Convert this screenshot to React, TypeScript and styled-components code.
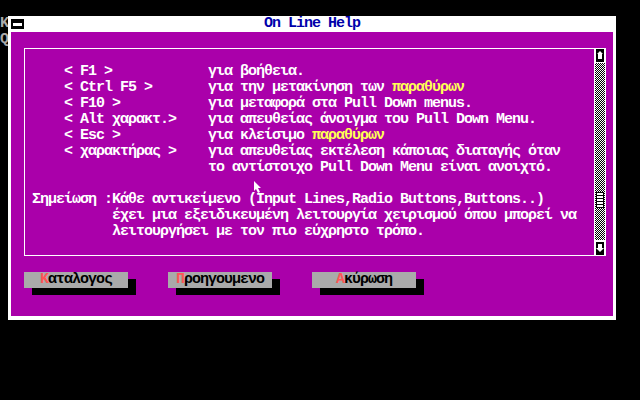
import React from "react";
import styled, { createGlobalStyle } from "styled-components";

const GlobalStyle = createGlobalStyle`
    body {
        margin: 0;
        background: #000000;
    }
`;

type HelpLine = {
    key: string;
    text: string;
    hot?: string;
};

const lines: HelpLine[] = [
    { key: "< F1 >", text: "για βοήθεια." },
    { key: "< Ctrl F5 >", text: "για την μετακίνηση των ", hot: "παραθύρων" },
    { key: "< F10 >", text: "για μεταφορά στα Pull Down menus." },
    { key: "< Alt χαρακτ.>", text: "για απευθείας άνοιγμα του Pull Down Menu." },
    { key: "< Esc >", text: "για κλείσιμο ", hot: "παραθύρων" },
    { key: "< χαρακτήρας >", text: "για απευθείας εκτέλεση κάποιας διαταγής όταν" },
    { key: "", text: "το αντίστοιχο Pull Down Menu είναι ανοιχτό." },
];

const buttons = ["Καταλογος", "Προηγουμενο", "Ακύρωση"];

export default function App() {
    return (
        <Screen>
            <GlobalStyle />
            <Backdrop>
                <div>K</div>
                <div>Q</div>
            </Backdrop>
            <Window>
                <TitleBar>
                    <CloseBox><Dash /></CloseBox>
                    <Title>On Line Help</Title>
                    <span />
                </TitleBar>
                <Body>
                    <HelpPanel>
                        <TextArea>
                            {lines.map((l, i) => (
                                <KeyRow key={i}>
                                    <span>{l.key}</span>
                                    <span>{l.text}{l.hot && <Hot>{l.hot}</Hot>}</span>
                                </KeyRow>
                            ))}
                            <Note>
                                <span>Σημείωση :</span>
                                <div>
                                    <div>Κάθε αντικείμενο (Input Lines,Radio Buttons,Buttons..)</div>
                                    <div>έχει μια εξειδικευμένη λειτουργία χειρισμού όπου μπορεί να</div>
                                    <div>λειτουργήσει με τον πιο εύχρηστο τρόπο.</div>
                                </div>
                            </Note>
                        </TextArea>
                        <ScrollBar>
                            <ArrowBox>
                                <svg width="8" height="13" viewBox="0 0 8 13">
                                    <path d="M4 2 L7 5 H6 V10 H2 V5 H1 Z" fill="#fff" />
                                </svg>
                            </ArrowBox>
                            <Track>
                                <Thumb style={{ marginTop: 129 }} />
                            </Track>
                            <ArrowBox $down>
                                <svg width="8" height="13" viewBox="0 0 8 13">
                                    <path d="M2 2 H6 V6 H8 L4 10 L0 6 H2 Z" fill="#fff" />
                                </svg>
                            </ArrowBox>
                        </ScrollBar>
                    </HelpPanel>
                    <ButtonRow>
                        {buttons.map((b) => (
                            <Button key={b}>
                                <Hotkey>{b[0]}</Hotkey>{b.slice(1)}
                            </Button>
                        ))}
                    </ButtonRow>
                </Body>
            </Window>
            <Cursor width="9" height="12" viewBox="0 0 9 12">
                <path d="M0 0 V10 L2 8 L4 12 L6 11 L4 7 H7 Z" fill="#fff" />
            </Cursor>
        </Screen>
    );
}

const Screen = styled.div`
    position: relative;
    display: flex;
    width: 640px;
    height: 400px;
    padding-top: 16px;
    box-sizing: border-box;
    background: #000000;
    font-family: "Liberation Mono", "DejaVu Sans Mono", monospace;
    font-weight: bold;
    font-size: 15px;
    letter-spacing: -1px;
    line-height: 16px;
    color: #ffffff;
    white-space: pre;
    overflow: hidden;
`;

const Backdrop = styled.div`
    width: 8px;
    color: #aaaaaa;
`;

const Window = styled.div`
    display: flex;
    flex-direction: column;
    width: 608px;
    height: 304px;
`;

const TitleBar = styled.div`
    display: grid;
    grid-template-columns: 1fr auto 1fr;
    align-items: center;
    height: 16px;
    background: #ffffff;
`;

const CloseBox = styled.div`
    display: flex;
    align-items: center;
    justify-content: center;
    width: 13px;
    height: 10px;
    margin-left: 3px;
    background: #000000;
`;

const Dash = styled.div`
    width: 9px;
    height: 3px;
    background: #ffffff;
`;

const Title = styled.div`
    color: #0000aa;
`;

const Body = styled.div`
    flex: 1;
    display: flex;
    flex-direction: column;
    background: #aa00aa;
    border: 3px solid #ffffff;
    border-top: none;
    border-bottom-width: 4px;
    padding: 16px 0 0 13px;
`;

const HelpPanel = styled.div`
    display: flex;
    width: 582px;
    height: 208px;
`;

const TextArea = styled.div`
    flex: 1;
    border: 1px solid #ffffff;
    border-right: none;
    padding: 15px 0 0 7px;
`;

const KeyRow = styled.div`
    display: grid;
    grid-template-columns: 144px 1fr;
    margin-left: 32px;
    height: 16px;
`;

const Hot = styled.span`
    color: #ffff55;
`;

const Note = styled.div`
    display: grid;
    grid-template-columns: 80px 1fr;
    margin-top: 16px;
`;

const ScrollBar = styled.div`
    display: flex;
    flex-direction: column;
    align-items: center;
    width: 12px;
    background: #ffffff;
`;

const ArrowBox = styled.div<{ $down?: boolean }>`
    display: flex;
    width: 8px;
    height: 13px;
    margin: ${(p) => (p.$down ? "2px 0 1px" : "1px 0 1px")};
    background: #000000;
`;

const Track = styled.div`
    flex: 1;
    width: 10px;
    display: flex;
    flex-direction: column;
    align-items: center;
    background: repeating-conic-gradient(#000000 0 25%, #ffffff 0 50%) 0 0 / 2px 2px;
`;

const Thumb = styled.div`
    width: 8px;
    height: 16px;
    box-sizing: border-box;
    border: 1px solid #000000;
    background: repeating-linear-gradient(#ffffff 0 2px, #000000 2px 3px);
    background-color: #ffffff;
`;

const ButtonRow = styled.div`
    display: flex;
    gap: 40px;
    margin-top: 16px;
`;

const Button = styled.div`
    width: 104px;
    height: 16px;
    text-align: center;
    background: #aaaaaa;
    color: #000000;
    box-shadow: 8px 7px 0 #000000;
`;

const Hotkey = styled.span`
    color: #ff5555;
`;

const Cursor = styled.svg`
    position: absolute;
    left: 254px;
    top: 181px;
`;
